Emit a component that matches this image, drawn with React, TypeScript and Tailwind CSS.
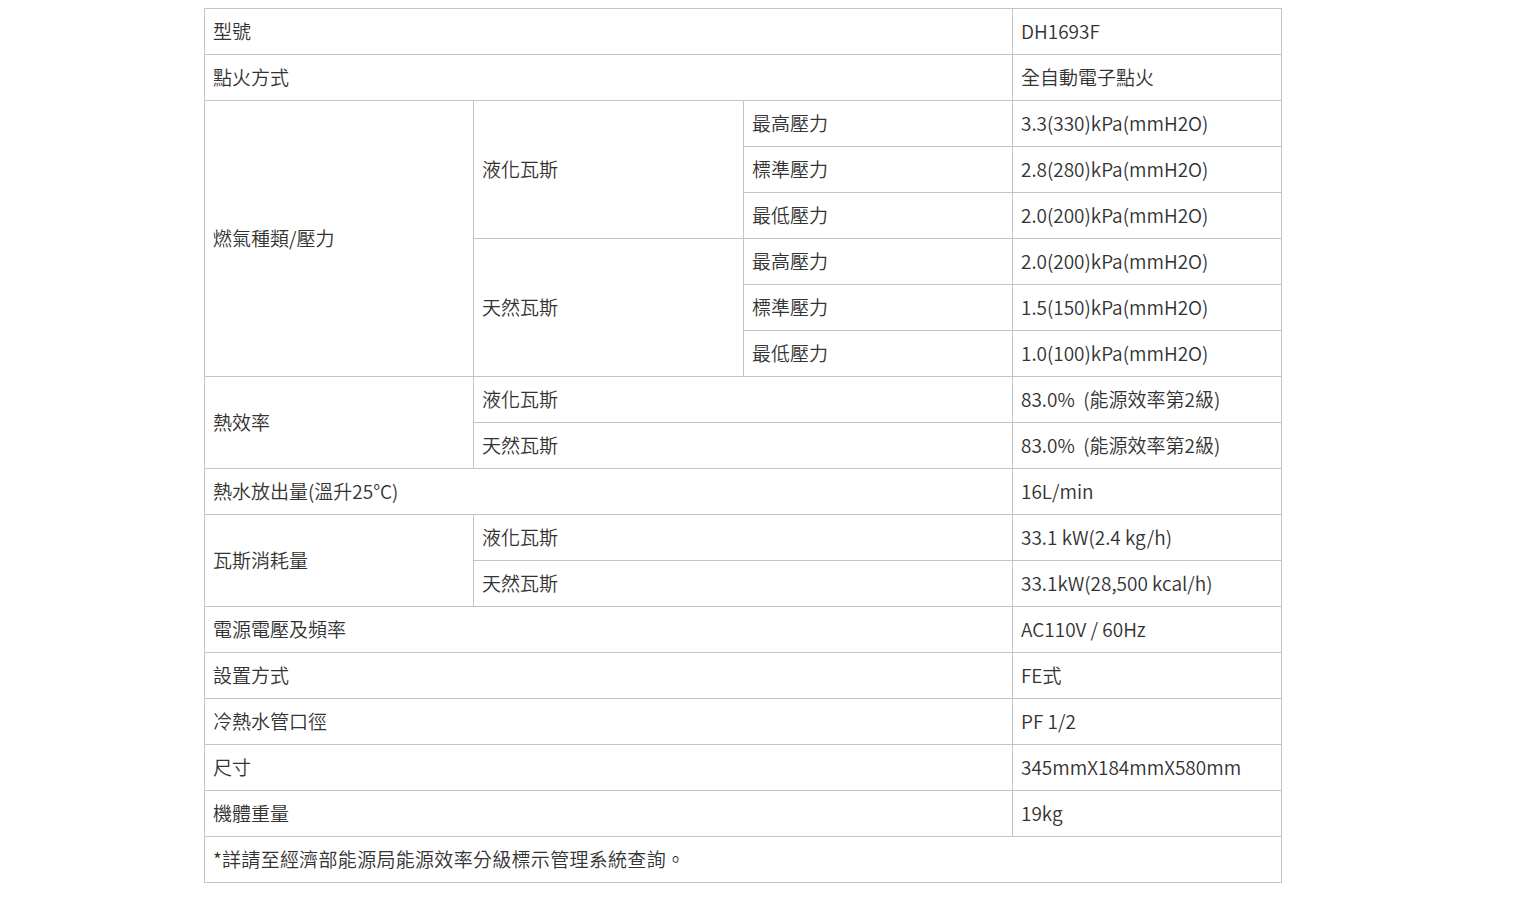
import React from "react";

const td = "border border-[#c4c4c4] align-middle h-[46px] p-0 pl-[8px] pb-[2px] font-[350]";

export default function App() {
  return (
    <div
      className="min-h-screen bg-white pt-[8px] pl-[204px] text-[#333333]"
      style={{ fontFamily: '"Noto Sans CJK TC", "Noto Sans", sans-serif' }}
    >
      <table className="border-collapse w-[1077px] table-fixed text-[19px] leading-[24px]">
        <colgroup>
          <col className="w-[269px]" />
          <col className="w-[270px]" />
          <col className="w-[269px]" />
          <col className="w-[269px]" />
        </colgroup>
        <tbody>
          <tr>
            <td className={td} colSpan={3}>型號</td>
            <td className={td}>DH1693F</td>
          </tr>
          <tr>
            <td className={td} colSpan={3}>點火方式</td>
            <td className={td}>全自動電子點火</td>
          </tr>
          <tr>
            <td className={td} rowSpan={6}>燃氣種類/壓力</td>
            <td className={td} rowSpan={3}>液化瓦斯</td>
            <td className={td}>最高壓力</td>
            <td className={td}>3.3(330)kPa(mmH2O)</td>
          </tr>
          <tr>
            <td className={td}>標準壓力</td>
            <td className={td}>2.8(280)kPa(mmH2O)</td>
          </tr>
          <tr>
            <td className={td}>最低壓力</td>
            <td className={td}>2.0(200)kPa(mmH2O)</td>
          </tr>
          <tr>
            <td className={td} rowSpan={3}>天然瓦斯</td>
            <td className={td}>最高壓力</td>
            <td className={td}>2.0(200)kPa(mmH2O)</td>
          </tr>
          <tr>
            <td className={td}>標準壓力</td>
            <td className={td}>1.5(150)kPa(mmH2O)</td>
          </tr>
          <tr>
            <td className={td}>最低壓力</td>
            <td className={td}>1.0(100)kPa(mmH2O)</td>
          </tr>
          <tr>
            <td className={td} rowSpan={2}>熱效率</td>
            <td className={td} colSpan={2}>液化瓦斯</td>
            <td className={td}>83.0%{"\u00a0 "}(能源效率第2級)</td>
          </tr>
          <tr>
            <td className={td} colSpan={2}>天然瓦斯</td>
            <td className={td}>83.0%{"\u00a0 "}(能源效率第2級)</td>
          </tr>
          <tr>
            <td className={td} colSpan={3}>熱水放出量(溫升25°C)</td>
            <td className={td}>16L/min</td>
          </tr>
          <tr>
            <td className={td} rowSpan={2}>瓦斯消耗量</td>
            <td className={td} colSpan={2}>液化瓦斯</td>
            <td className={td}>33.1 kW(2.4 kg/h)</td>
          </tr>
          <tr>
            <td className={td} colSpan={2}>天然瓦斯</td>
            <td className={td}>33.1kW(28,500 kcal/h)</td>
          </tr>
          <tr>
            <td className={td} colSpan={3}>電源電壓及頻率</td>
            <td className={td}>AC110V / 60Hz</td>
          </tr>
          <tr>
            <td className={td} colSpan={3}>設置方式</td>
            <td className={td}>FE式</td>
          </tr>
          <tr>
            <td className={td} colSpan={3}>冷熱水管口徑</td>
            <td className={td}>PF 1/2</td>
          </tr>
          <tr>
            <td className={td} colSpan={3}>尺寸</td>
            <td className={td}>345mmX184mmX580mm</td>
          </tr>
          <tr>
            <td className={td} colSpan={3}>機體重量</td>
            <td className={td}>19kg</td>
          </tr>
          <tr>
            <td className={`${td} tracking-[0.3px]`} colSpan={4}>*詳請至經濟部能源局能源效率分級標示管理系統查詢。</td>
          </tr>
        </tbody>
      </table>
    </div>
  );
}
